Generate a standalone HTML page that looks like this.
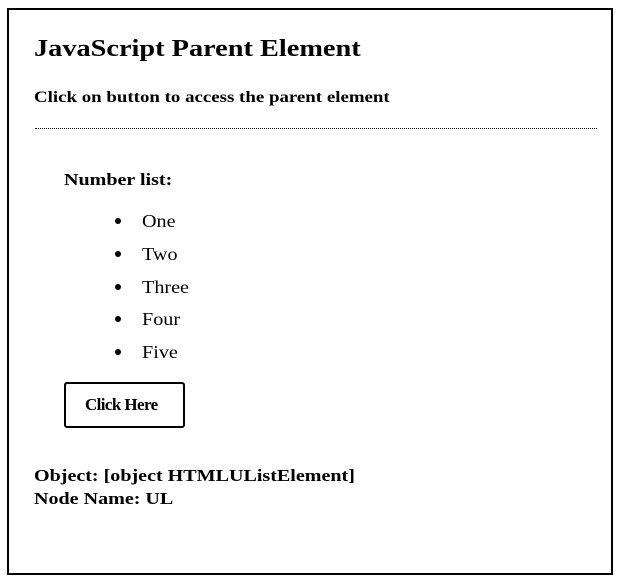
<!DOCTYPE html>
<html><head><style>
body{margin:0;width:623px;height:580px;background:#fff;font-family:"Liberation Serif",serif;color:#000;position:relative;overflow:hidden}
.b{position:absolute;left:7px;top:8px;width:602px;height:563px;border:2px solid #000}
.t{position:absolute;white-space:nowrap;line-height:1;transform:scaleX(1.18);transform-origin:left}
.li{position:absolute;left:142px;font-size:18px;line-height:1;transform:scaleX(1.12);transform-origin:left}
.dot{position:absolute;left:115px;width:6px;height:6px;border-radius:50%;background:#000}
</style></head><body>
<div class="b"></div>
<div class="t" style="left:34px;top:37px;font-size:24px;font-weight:bold">JavaScript Parent Element</div>
<div class="t" style="left:34px;top:90px;font-size:16px;font-weight:bold">Click on button to access the parent element</div>
<div style="position:absolute;left:35px;top:128px;width:562px;border-top:1px dotted #000"></div>
<div class="t" style="left:64px;top:171px;font-size:17px;font-weight:bold">Number list:</div>
<div class="dot" style="top:218px"></div><div class="li" style="top:212px">One</div>
<div class="dot" style="top:251px"></div><div class="li" style="top:245px">Two</div>
<div class="dot" style="top:284px"></div><div class="li" style="top:278px">Three</div>
<div class="dot" style="top:316px"></div><div class="li" style="top:310px">Four</div>
<div class="dot" style="top:349px"></div><div class="li" style="top:343px">Five</div>
<div style="position:absolute;left:64px;top:382px;width:117px;height:42px;border:2px solid #000;border-radius:3px"></div>
<div class="t" style="left:85px;top:396px;font-size:17px;font-weight:bold;letter-spacing:-0.6px;transform:none">Click Here</div>
<div class="t" style="left:34px;top:467px;font-size:17px;font-weight:bold">Object: [object HTMLUListElement]</div>
<div class="t" style="left:34px;top:490px;font-size:17px;font-weight:bold">Node Name: UL</div>
</body></html>
